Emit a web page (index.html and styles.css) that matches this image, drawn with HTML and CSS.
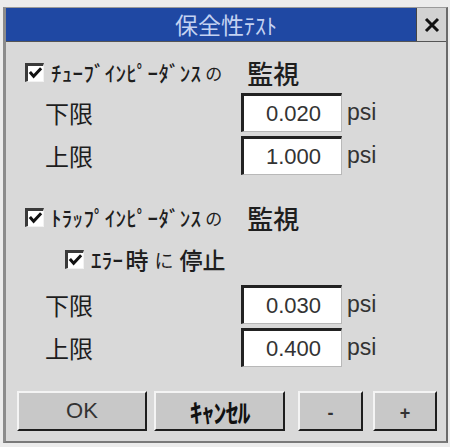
FILE: index.html
```html
<!DOCTYPE html>
<html lang="ja">
<head>
    <meta charset="UTF-8">
    <title>保全性テスト</title>
    <link rel="stylesheet" href="styles.css">
</head>
<body>
    <div class="window">
        <div class="titlebar">
            <span class="title-spacer"></span>
            <span class="title">保全性<span class="half">ﾃｽﾄ</span></span>
            <button class="close-btn">
                <svg width="18" height="18" viewBox="0 0 18 18"><path d="M3 3 L15 15 M15 3 L3 15" stroke="#111" stroke-width="3" fill="none"/></svg>
            </button>
        </div>

        <div class="content">
            <!-- tube impedance -->
            <label class="check-row head-1">
                <span class="checkbox"><svg width="16" height="16" viewBox="0 0 16 16"><path d="M2 7 L6 11.5 L14 3" stroke="#111" stroke-width="3.2" fill="none"/></svg></span>
                <span class="kana">ﾁｭｰﾌﾞｲﾝﾋﾟｰﾀﾞﾝｽ</span><span class="no">の</span><span class="kanji">監視</span>
            </label>
            <div class="field-row first">
                <span class="field-label">下限</span>
                <span class="field-box">0.020</span>
                <span class="unit">psi</span>
            </div>
            <div class="field-row">
                <span class="field-label">上限</span>
                <span class="field-box">1.000</span>
                <span class="unit">psi</span>
            </div>

            <!-- trap impedance -->
            <label class="check-row head-2">
                <span class="checkbox"><svg width="16" height="16" viewBox="0 0 16 16"><path d="M2 7 L6 11.5 L14 3" stroke="#111" stroke-width="3.2" fill="none"/></svg></span>
                <span class="kana">ﾄﾗｯﾌﾟｲﾝﾋﾟｰﾀﾞﾝｽ</span><span class="no">の</span><span class="kanji">監視</span>
            </label>
            <label class="check-row sub">
                <span class="checkbox"><svg width="16" height="16" viewBox="0 0 16 16"><path d="M2 7 L6 11.5 L14 3" stroke="#111" stroke-width="3.2" fill="none"/></svg></span>
                <span class="kana">ｴﾗｰ</span><span class="kanji small">時</span><span class="no">に</span><span class="kanji small">停止</span>
            </label>
            <div class="field-row second">
                <span class="field-label">下限</span>
                <span class="field-box">0.030</span>
                <span class="unit">psi</span>
            </div>
            <div class="field-row">
                <span class="field-label">上限</span>
                <span class="field-box">0.400</span>
                <span class="unit">psi</span>
            </div>

            <div class="buttons">
                <button class="btn btn-ok">OK</button>
                <button class="btn btn-cancel">ｷｬﾝｾﾙ</button>
                <button class="btn btn-minus">-</button>
                <button class="btn btn-plus">+</button>
            </div>
        </div>
    </div>
</body>
</html>
```

FILE: styles.css
```css
body {
    margin: 0;
    padding: 0;
    background: #ececec;
    font-family: "Noto Sans CJK JP", "Liberation Sans", sans-serif;
    color: #222;
}

.window {
    box-sizing: border-box;
    width: 445px;
    height: 436px;
    margin: 7px 0 0 3px;
    background: #d9d9d9;
    border-top: 1px solid #9a9a9a;
    border-left: 3px solid #8c8c8c;
    border-right: 2px solid #6a6a6a;
    border-bottom: 2px solid #7a7a7a;
}

.titlebar {
    display: grid;
    grid-template-columns: 30px 1fr 30px;
    height: 33px;
    background: #1f48a3;
    border-bottom: 1px solid #555;
}

.title {
    text-align: center;
    color: #c4d2f2;
    font-size: 23px;
    line-height: 33px;
}

.title .half {
    font-size: 22px;
}

.close-btn {
    margin: 0;
    padding: 0;
    display: flex;
    align-items: center;
    justify-content: center;
    background: #d2d2d2;
    border: none;
    border-left: 1px solid #444;
}

.content {
    padding-left: 19px;
}

.check-row {
    display: flex;
    align-items: center;
    height: 26px;
    white-space: nowrap;
    color: #1e1e1e;
}

.head-1 {
    margin-top: 17px;
}

.head-2 {
    margin-top: 29px;
}

.sub {
    margin-top: 16px;
    padding-left: 40px;
}

.checkbox {
    box-sizing: border-box;
    width: 19px;
    height: 19px;
    margin-right: 7px;
    display: flex;
    align-items: center;
    justify-content: center;
    background: #fff;
    border-top: 3px solid #3a3a3a;
    border-left: 3px solid #3a3a3a;
    border-right: 1px solid #f2f2f2;
    border-bottom: 1px solid #f2f2f2;
}

.kana {
    font-size: 21px;
    font-weight: 500;
    letter-spacing: 0.3px;
}

.no {
    font-size: 17px;
    margin: 0 3px 0 4px;
}

.kanji {
    font-size: 26px;
    margin-left: 22px;
    font-weight: 500;
}

.sub .kana {
    font-size: 21px;
    margin-right: 2px;
}

.kanji.small {
    font-size: 23px;
    margin-left: 0;
}

.sub .no {
    font-size: 19px;
    margin: 0 6px;
}

.field-row {
    display: grid;
    grid-template-columns: 196px 101px auto;
    align-items: center;
    margin-top: 4px;
    padding-left: 20px;
}

.field-row.first {
    margin-top: 8px;
}

.field-row.second {
    margin-top: 13px;
}

.field-label {
    font-size: 24px;
    color: #1e1e1e;
}

.field-box {
    box-sizing: border-box;
    height: 39px;
    padding-right: 20px;
    text-align: right;
    background: #fff;
    border-top: 3px solid #222;
    border-left: 3px solid #222;
    border-right: 1px solid #b8b8b8;
    border-bottom: 1px solid #b8b8b8;
    font-family: "Liberation Sans", Arial, sans-serif;
    font-size: 22px;
    line-height: 35px;
    color: #333;
}

.unit {
    margin-left: 5px;
    font-family: "Liberation Sans", Arial, sans-serif;
    font-size: 23px;
    color: #333;
}

.buttons {
    display: flex;
    margin-top: 24px;
    margin-left: -8px;
}

.btn {
    box-sizing: border-box;
    height: 40px;
    padding: 0;
    background: #c8c8c8;
    border-top: 2px solid #f4f4f4;
    border-left: 2px solid #f4f4f4;
    border-right: 2px solid #1e1e1e;
    border-bottom: 2px solid #1e1e1e;
    color: #333;
    font-family: "Liberation Sans", Arial, sans-serif;
    font-size: 22px;
}

.btn-ok {
    width: 130px;
}

.btn-cancel {
    width: 131px;
    margin-left: 7px;
    font-family: "Noto Sans CJK JP", sans-serif;
    font-weight: bold;
    color: #111;
    font-size: 26px;
    letter-spacing: -1px;
}

.btn-minus {
    width: 65px;
    margin-left: 13px;
    font-weight: bold;
    font-size: 18px;
    padding-top: 4px;
}

.btn-plus {
    width: 64px;
    margin-left: 10px;
    font-weight: bold;
    font-size: 18px;
    padding-top: 4px;
}
```
